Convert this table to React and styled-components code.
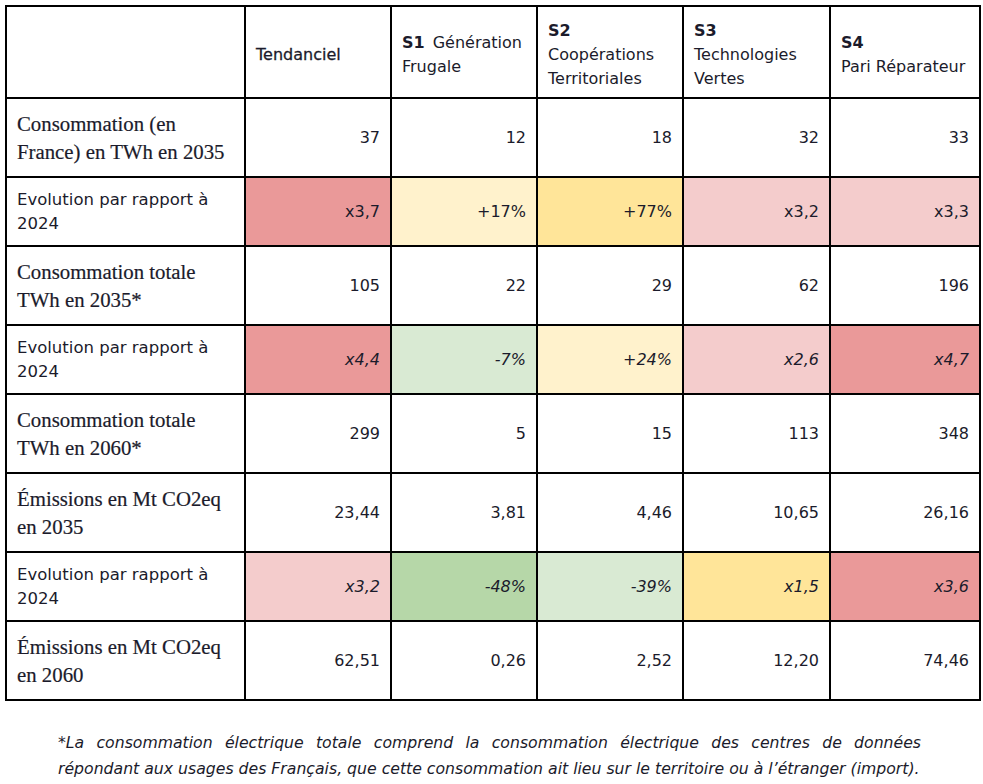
import React from 'react';
import styled, { createGlobalStyle } from 'styled-components';

const GlobalStyle = createGlobalStyle`
  html, body {
    margin: 0;
    padding: 0;
    background: #ffffff;
  }
`;

const palette = {
  red2: '#ea9999',
  red3: '#f4cccc',
  yellow2: '#ffe599',
  yellow3: '#fff2cc',
  green2: '#b6d7a8',
  green3: '#d9ead3',
};

const sans = `"DejaVu Sans", "Open Sans", sans-serif`;
const serif = `"Liberation Serif", "DejaVu Serif", serif`;
const ink = '#1b1b2b';

const Page = styled.div`
  padding: 5px 0 0 5px;
  width: 974px;
`;

const Table = styled.table`
  width: 974px;
  border-collapse: collapse;
  table-layout: fixed;
  border: 2px solid #000;
`;

const HeadCell = styled.th`
  border: 2px solid #000;
  padding: 5px 8px 0 10px;
  text-align: left;
  vertical-align: middle;
  font-family: ${sans};
  font-size: 16px;
  font-weight: 400;
  line-height: 24px;
  color: ${ink};
  -webkit-text-stroke: ${({ $strong }) => ($strong ? '0.3px' : '0')};
`;

const Code = styled.b`
  font-weight: 700;
  margin-right: ${({ $inline }) => ($inline ? '8px' : '0')};
`;

const Row = styled.tr`
  height: ${({ $h }) => $h}px;
`;

const Label = styled.td`
  border: 2px solid #000;
  padding: 0 4px 0 10px;
  vertical-align: middle;
  white-space: nowrap;
  color: ${ink};
  font-family: ${({ $serif }) => ($serif ? serif : sans)};
  font-size: ${({ $serif }) => ($serif ? '20.8px' : '16.5px')};
  line-height: ${({ $serif }) => ($serif ? '28px' : '24px')};
  -webkit-text-stroke: ${({ $serif }) => ($serif ? '0.2px' : '0')};
`;

const Value = styled.td`
  border: 2px solid #000;
  padding: 0 10px 0 6px;
  text-align: right;
  vertical-align: middle;
  font-family: ${sans};
  font-size: 16px;
  line-height: 24px;
  color: ${ink};
  font-style: ${({ $italic }) => ($italic ? 'italic' : 'normal')};
  background: ${({ $tone }) => ($tone ? palette[$tone] : '#ffffff')};
`;

const Note = styled.div`
  margin: 29px 0 0 53px;
  width: 863px;
  font-family: ${sans};
  font-style: italic;
  font-size: 15.7px;
  line-height: 26px;
  color: ${ink};
`;

const NoteLine = styled.div`
  white-space: nowrap;
  text-align: ${({ $justify }) => ($justify ? 'justify' : 'left')};
  text-align-last: ${({ $justify }) => ($justify ? 'justify' : 'auto')};
`;

const columns = [239, 146, 146, 146, 147, 150];

const rows = [
  { label: ['Consommation (en', 'France) en TWh en 2035'], serif: true, h: 79, values: ['37', '12', '18', '32', '33'] },
  {
    label: ['Evolution par rapport à', '2024'], h: 69,
    values: ['x3,7', '+17%', '+77%', 'x3,2', 'x3,3'],
    tones: ['red2', 'yellow3', 'yellow2', 'red3', 'red3'],
  },
  { label: ['Consommation totale', 'TWh en 2035*'], serif: true, h: 79, values: ['105', '22', '29', '62', '196'] },
  {
    label: ['Evolution par rapport à', '2024'], h: 69, italic: true,
    values: ['x4,4', '-7%', '+24%', 'x2,6', 'x4,7'],
    tones: ['red2', 'green3', 'yellow3', 'red3', 'red2'],
  },
  { label: ['Consommation totale', 'TWh en 2060*'], serif: true, h: 79, values: ['299', '5', '15', '113', '348'] },
  { label: ['Émissions en Mt CO2eq', 'en 2035'], serif: true, h: 79, values: ['23,44', '3,81', '4,46', '10,65', '26,16'] },
  {
    label: ['Evolution par rapport à', '2024'], h: 69, italic: true,
    values: ['x3,2', '-48%', '-39%', 'x1,5', 'x3,6'],
    tones: ['red3', 'green2', 'green3', 'yellow2', 'red2'],
  },
  { label: ['Émissions en Mt CO2eq', 'en 2060'], serif: true, h: 79, values: ['62,51', '0,26', '2,52', '12,20', '74,46'] },
];

export default function App() {
  return (
    <Page>
      <GlobalStyle />
      <Table>
        <colgroup>
          {columns.map((w, i) => (
            <col key={i} style={{ width: w }} />
          ))}
        </colgroup>
        <thead>
          <Row $h={92}>
            <HeadCell />
            <HeadCell $strong>Tendanciel</HeadCell>
            <HeadCell>
              <Code $inline>S1</Code>Génération<br />Frugale
            </HeadCell>
            <HeadCell>
              <Code>S2</Code><br />Coopérations<br />Territoriales
            </HeadCell>
            <HeadCell>
              <Code>S3</Code><br />Technologies<br />Vertes
            </HeadCell>
            <HeadCell>
              <Code>S4</Code><br />Pari Réparateur
            </HeadCell>
          </Row>
        </thead>
        <tbody>
          {rows.map((r, i) => (
            <Row key={i} $h={r.h}>
              <Label $serif={r.serif}>
                {r.label[0]}<br />{r.label[1]}
              </Label>
              {r.values.map((v, j) => (
                <Value key={j} $italic={r.italic} $tone={r.tones ? r.tones[j] : null}>
                  {v}
                </Value>
              ))}
            </Row>
          ))}
        </tbody>
      </Table>
      <Note>
        <NoteLine $justify>
          *La consommation électrique totale comprend la consommation électrique des centres de données
        </NoteLine>
        <NoteLine>
          répondant aux usages des Français, que cette consommation ait lieu sur le territoire ou à l’étranger (import).
        </NoteLine>
      </Note>
    </Page>
  );
}
